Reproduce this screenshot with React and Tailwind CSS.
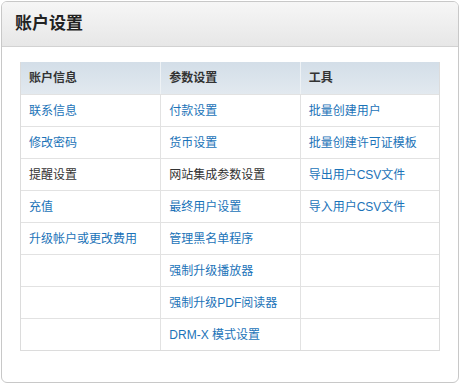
const rows = [
  [
    { t: "联系信息" },
    { t: "付款设置" },
    { t: "批量创建用户" },
  ],
  [
    { t: "修改密码" },
    { t: "货币设置" },
    { t: "批量创建许可证模板" },
  ],
  [
    { t: "提醒设置", dark: true },
    { t: "网站集成参数设置", dark: true },
    { t: "导出用户CSV文件" },
  ],
  [
    { t: "充值" },
    { t: "最终用户设置" },
    { t: "导入用户CSV文件" },
  ],
  [{ t: "升级帐户或更改费用" }, { t: "管理黑名单程序" }, { t: "" }],
  [{ t: "" }, { t: "强制升级播放器" }, { t: "" }],
  [{ t: "" }, { t: "强制升级PDF阅读器" }, { t: "" }],
  [{ t: "" }, { t: "DRM-X 模式设置" }, { t: "" }],
];

export default function App() {
  return (
    <div
      className="w-[460px] h-[383px] bg-white pt-px pl-px"
      style={{ fontFamily: '"Liberation Sans", Arial, "Noto Sans CJK SC", sans-serif' }}
    >
      <div className="w-[458px] h-[382px] border border-[#c8c8c8] rounded-[6px] overflow-hidden bg-white">
        {/* Header */}
        <div className="h-[45px] border-b border-[#d2d2d2] bg-gradient-to-b from-[#f6f6f6] to-[#e7e7e7] flex items-center pl-[13px]">
          <h1 className="text-[17px] font-bold text-[#222]">账户设置</h1>
        </div>

        {/* Table */}
        <div className="pl-[18px] pt-[15px]">
          <div className="w-[420px] border border-[#dcdcdc] border-t-0">
            <div className="grid grid-cols-3 h-[32px] bg-gradient-to-b from-[#d3dee8] to-[#e2e9ef]">
              {["账户信息", "参数设置", "工具"].map((h, i) => (
                <div
                  key={h}
                  className={
                    "flex items-center pl-[8px] text-[12px] font-bold text-[#333] " +
                    (i > 0 ? "border-l border-[#eef2f5]" : "")
                  }
                >
                  {h}
                </div>
              ))}
            </div>
            {rows.map((r, ri) => (
              <div key={ri} className="grid grid-cols-3 h-[32px] border-t border-[#e2e2e2]">
                {r.map((c, ci) => (
                  <div
                    key={ci}
                    className={
                      "flex items-center pl-[8px] text-[12px] " +
                      (c.dark ? "text-[#333] " : "text-[#1b73b8] ") +
                      (ci > 0 ? "border-l border-[#e2e2e2]" : "")
                    }
                  >
                    {c.t}
                  </div>
                ))}
              </div>
            ))}
          </div>
        </div>
      </div>
    </div>
  );
}
